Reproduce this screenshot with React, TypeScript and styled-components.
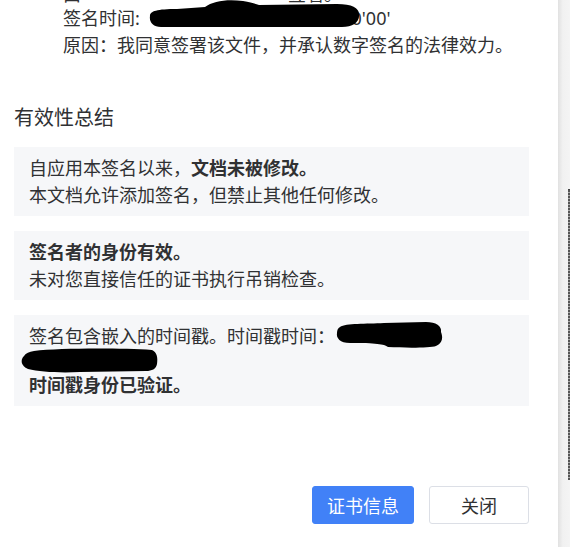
import * as React from "react";
import styled, { createGlobalStyle } from "styled-components";

const GlobalStyle = createGlobalStyle`
  html, body {
    margin: 0;
    padding: 0;
    background: #fff;
  }
  body {
    font-family: "Noto Sans", "Noto Sans CJK SC", sans-serif;
    color: #303133;
  }
`;

const Screen = styled.div`
  display: flex;
  width: 570px;
  height: 547px;
  overflow: hidden;
`;

const Panel = styled.div`
  display: flex;
  flex-direction: column;
  width: 558px;
  height: 100%;
  background: #fff;
`;

const Gutter = styled.div`
  display: flex;
  flex-direction: column;
  align-items: flex-end;
  flex: 1;
  padding-top: 189px;
  background: linear-gradient(to right, #e1e1e1, #f1f1f1 40%, #f4f4f4);
`;

const GutterEdge = styled.div`
  width: 2px;
  height: 290px;
  border-top: 1px solid #444;
  background: repeating-linear-gradient(to bottom, #555 0 2px, #a8a8a8 2px 3px);
`;

const Body = styled.div`
  flex: 1;
  overflow: hidden;
  padding: 0 29px 0 14px;
`;

const Details = styled.div`
  margin-top: -17px;
  padding-left: 49px;
  font-size: 18px;
`;

const DetailLine = styled.div<{ $lh?: number }>`
  line-height: ${(p) => p.$lh ?? 27}px;
  white-space: nowrap;
`;

const Heading = styled.div`
  margin: 45px 0 15px;
  font-size: 20px;
  line-height: 28px;
`;

const Cards = styled.div`
  display: flex;
  flex-direction: column;
  gap: 15px;
`;

const Card = styled.div`
  display: flex;
  flex-direction: column;
  gap: 5px;
  padding: 10px 15px;
  background: #f6f7f9;
  font-size: 18px;
  line-height: 22px;
`;

const Para = styled.div``;

const Strong = styled.b`
  font-weight: 700;
`;

const Footer = styled.div`
  display: flex;
  justify-content: flex-end;
  gap: 15px;
  padding: 0 29px 23px 14px;
`;

const Button = styled.button<{ $primary?: boolean }>`
  height: 38px;
  width: ${(p) => (p.$primary ? 102 : 100)}px;
  padding: 0;
  border-radius: 3px;
  border: 1px solid ${(p) => (p.$primary ? "#4181f7" : "#dcdfe6")};
  background: ${(p) => (p.$primary ? "#4181f7" : "#fff")};
  color: ${(p) => (p.$primary ? "#fff" : "#303133")};
  font-family: inherit;
  font-size: 18px;
  cursor: pointer;
`;

type Shape = {
  w: number;
  h: number;
  d: string;
  mt: number;
  mb: number;
  ml?: number;
  mr?: number;
};

const Scribble = styled.svg<{ $mt: number; $mb: number; $ml: number; $mr: number }>`
  display: inline-block;
  vertical-align: top;
  overflow: visible;
  position: relative;
  margin: ${(p) => `${p.$mt}px ${p.$mr}px ${p.$mb}px ${p.$ml}px`};
`;

const Redaction: React.FC<{ shape: Shape }> = ({ shape }) => (
  <Scribble
    width={shape.w}
    height={shape.h}
    viewBox={`0 0 ${shape.w} ${shape.h}`}
    $mt={shape.mt}
    $mb={shape.mb}
    $ml={shape.ml ?? 0}
    $mr={shape.mr ?? 0}
  >
    <path d={shape.d} fill="#000" />
  </Scribble>
);

const signerBlob: Shape = {
  w: 205,
  h: 14,
  d: "M4 2 C40 0 150 0 200 1 C205 4 205 11 198 13 L10 13 C2 12 0 5 4 2 Z",
  mt: -3,
  mb: -3,
  ml: 4,
  mr: -2,
};

const timeBlob: Shape = {
  w: 213,
  h: 28,
  d: "M3 16 C3 11 10 9 30 9 L58 7 C66 1 80 -1 96 1 C104 2 108 4 112 5 L190 4 C205 4 212 8 212 14 C213 22 206 27 195 27 L14 27 C6 27 2 22 3 16 Z",
  mt: -5,
  mb: -1,
  ml: 2,
  mr: -8,
};

const stampBlob: Shape = {
  w: 107,
  h: 27,
  d: "M4 6 C10 2 30 3 48 2 L90 1 C100 1 106 5 105 11 C107 16 107 22 100 25 C94 27 70 27 52 26 C48 23 40 22 14 22 C4 22 0 17 1 12 C1 9 2 7 4 6 Z",
  mt: -4,
  mb: -5,
  ml: 1,
};

const stampBlob2: Shape = {
  w: 138,
  h: 25,
  d: "M14 3 C40 0 100 0 132 2 C137 4 138 10 137 16 C136 21 132 23 126 23 L60 24 C40 25 20 24 8 21 C1 18 0 12 4 8 C6 5 9 4 14 3 Z",
  mt: 1,
  mb: -4,
  ml: -9,
};

export default function App() {
  return (
    <>
      <GlobalStyle />
      <Screen>
        <Panel>
          <Body>
            <Details>
              <DetailLine $lh={22}>
                由<Redaction shape={signerBlob} />签署。
              </DetailLine>
              <DetailLine>
                签名时间: <Redaction shape={timeBlob} />0'00'
              </DetailLine>
              <DetailLine>原因：我同意签署该文件，并承认数字签名的法律效力。</DetailLine>
            </Details>

            <Heading>有效性总结</Heading>

            <Cards>
              <Card>
                <Para>
                  自应用本签名以来，<Strong>文档未被修改。</Strong>
                </Para>
                <Para>本文档允许添加签名，但禁止其他任何修改。</Para>
              </Card>
              <Card>
                <Para>
                  <Strong>签名者的身份有效。</Strong>
                </Para>
                <Para>未对您直接信任的证书执行吊销检查。</Para>
              </Card>
              <Card>
                <Para>
                  签名包含嵌入的时间戳。时间戳时间：
                  <Redaction shape={stampBlob} />
                  <br />
                  <Redaction shape={stampBlob2} />
                </Para>
                <Para>
                  <Strong>时间戳身份已验证。</Strong>
                </Para>
              </Card>
            </Cards>
          </Body>

          <Footer>
            <Button $primary>证书信息</Button>
            <Button>关闭</Button>
          </Footer>
        </Panel>
        <Gutter>
          <GutterEdge />
        </Gutter>
      </Screen>
    </>
  );
}
